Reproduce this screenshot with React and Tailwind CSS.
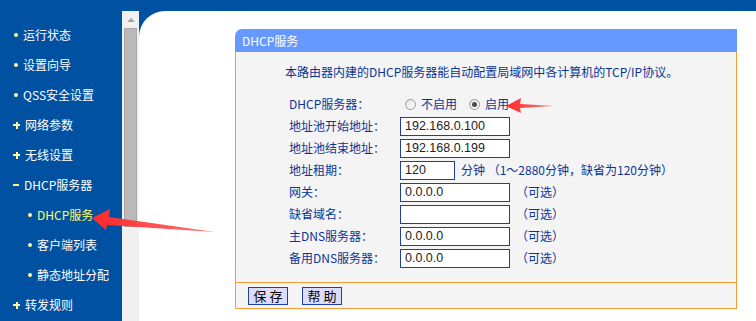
import React from 'react';

const menu = [
  { label: '运行状态', mark: 'dot' },
  { label: '设置向导', mark: 'dot' },
  { label: 'QSS安全设置', mark: 'dot' },
  { label: '网络参数', mark: 'plus' },
  { label: '无线设置', mark: 'plus' },
  { label: 'DHCP服务器', mark: 'minus' },
  { label: 'DHCP服务', mark: 'dot', sub: true, active: true },
  { label: '客户端列表', mark: 'dot', sub: true },
  { label: '静态地址分配', mark: 'dot', sub: true },
  { label: '转发规则', mark: 'plus' },
];

const font = { fontFamily: '"Noto Sans CJK SC", "Liberation Sans", sans-serif' };

function Mark({ type }) {
  if (type === 'plus') {
    return (
      <span className="relative w-[7px] h-[7px] mr-[5px] shrink-0">
        <span className="absolute left-0 top-[2.5px] w-[7px] h-[2px] bg-[#ffff99]" />
        <span className="absolute left-[2.5px] top-0 w-[2px] h-[7px] bg-[#ffff99]" />
      </span>
    );
  }
  if (type === 'minus') {
    return <span className="w-[6px] h-[2px] bg-[#ffff99] mr-[5px] shrink-0" />;
  }
  return <span className="w-[4px] h-[4px] rounded-full bg-[#ffff99] mx-[1px] mr-[5px] shrink-0" />;
}

function Radio({ checked }) {
  return (
    <span className="w-[11px] h-[11px] rounded-full border border-[#9a9a9a] bg-gradient-to-br from-[#e2e2e2] to-[#ffffff] flex items-center justify-center shrink-0">
      {checked && <span className="w-[5px] h-[5px] rounded-full bg-[#4a4a4a]" />}
    </span>
  );
}

function Field({ value, w = 'w-[110px]' }) {
  return (
    <div
      className={`${w} h-[19px] border border-[#1f3fa3] bg-white flex items-center px-[4px] text-[12.5px] text-[#222]`}
      style={{ fontFamily: '"Liberation Sans", Arial, sans-serif' }}
    >
      {value}
    </div>
  );
}

function Row({ label, children }) {
  return (
    <div className="h-[22px] flex items-center">
      <div className="w-[111px] shrink-0">{label}</div>
      {children}
    </div>
  );
}

const Optional = () => <span className="ml-[6px]">（可选）</span>;

export default function App() {
  return (
    <div className="w-[756px] h-[321px] bg-[#0051a2] pt-[11px] flex overflow-hidden relative" style={font}>
      {/* Left menu */}
      <div className="w-[122px] shrink-0 pt-[9px] text-[12px]">
        {menu.map((m) => (
          <div
            key={m.label}
            className={`h-[30px] flex items-center ${m.sub ? 'pl-[27px]' : 'pl-[13px]'} ${
              m.active ? 'text-[#ffff66]' : 'text-white'
            }`}
          >
            <Mark type={m.mark} />
            <span>{m.label}</span>
          </div>
        ))}
      </div>

      {/* Scrollbar */}
      <div className="w-[17px] shrink-0 bg-[#f0f0f0] flex flex-col items-center">
        <div className="h-[17px] flex items-center justify-center">
          <span className="w-0 h-0 border-l-[4px] border-r-[4px] border-b-[4px] border-l-transparent border-r-transparent border-b-[#a3a3a3]" />
        </div>
        <div className="w-[13px] h-[199px] bg-[#b9b9b9] border border-[#a8a8a8]" />
      </div>

      {/* Content */}
      <div className="flex-1 bg-white rounded-tl-[26px] pt-[18px] pl-[96px]">
        <div className="w-[502px] text-[12px] text-[#0a3597]">
          <div className="h-[23px] bg-[#6699ff] rounded-tl-[7px] text-white flex items-center pl-[7px]">DHCP服务</div>
          <div className="bg-[#f4f4f4] border-x border-[#ff9933] pt-[12px] pb-[13px]">
            <div className="h-[16px] flex items-center pl-[49px]">
              本路由器内建的DHCP服务器能自动配置局域网中各计算机的TCP/IP协议。
            </div>
            <div className="pl-[53px] mt-[13px]">
              <Row label="DHCP服务器：">
                <div className="flex items-center ml-[5px]">
                  <Radio />
                  <span className="ml-[5px]">不启用</span>
                  <span className="ml-[12px]" />
                  <Radio checked />
                  <span className="ml-[5px]">启用</span>
                </div>
              </Row>
              <Row label="地址池开始地址：">
                <Field value="192.168.0.100" />
              </Row>
              <Row label="地址池结束地址：">
                <Field value="192.168.0.199" />
              </Row>
              <Row label="地址租期：">
                <Field value="120" w="w-[55px]" />
                <span className="ml-[6px]">分钟 （1～2880分钟，缺省为120分钟）</span>
              </Row>
              <Row label="网关：">
                <Field value="0.0.0.0" />
                <Optional />
              </Row>
              <Row label="缺省域名：">
                <Field value="" />
                <Optional />
              </Row>
              <Row label="主DNS服务器：">
                <Field value="0.0.0.0" />
                <Optional />
              </Row>
              <Row label="备用DNS服务器：">
                <Field value="0.0.0.0" />
                <Optional />
              </Row>
            </div>
          </div>
          <div className="h-[27px] bg-[#f4f4f4] border border-[#ff9933] flex items-center pl-[12px] gap-[14px]">
            <button className="w-[40px] h-[18px] bg-[#dcdcff] border border-[#1f3fa3] text-black text-[13px] leading-none tracking-[3px] pl-[3px]">
              保存
            </button>
            <button className="w-[40px] h-[18px] bg-[#dcdcff] border border-[#1f3fa3] text-black text-[13px] leading-none tracking-[3px] pl-[3px]">
              帮助
            </button>
          </div>
        </div>
      </div>

      {/* Red arrows */}
      <svg className="absolute left-0 top-0 pointer-events-none" width="756" height="321">
        <defs>
          <linearGradient id="ar" x1="0" x2="1" y1="0" y2="0">
            <stop offset="0" stopColor="#ff2b2b" />
            <stop offset="1" stopColor="#ff5a5a" stopOpacity="0.85" />
          </linearGradient>
        </defs>
        <polygon points="92,218 110,209 109,217 215,232 107,225 106,230" fill="url(#ar)" />
        <polygon points="506,106 521,98 520,104 554,106 520,108 521,113" fill="url(#ar)" />
      </svg>
    </div>
  );
}
